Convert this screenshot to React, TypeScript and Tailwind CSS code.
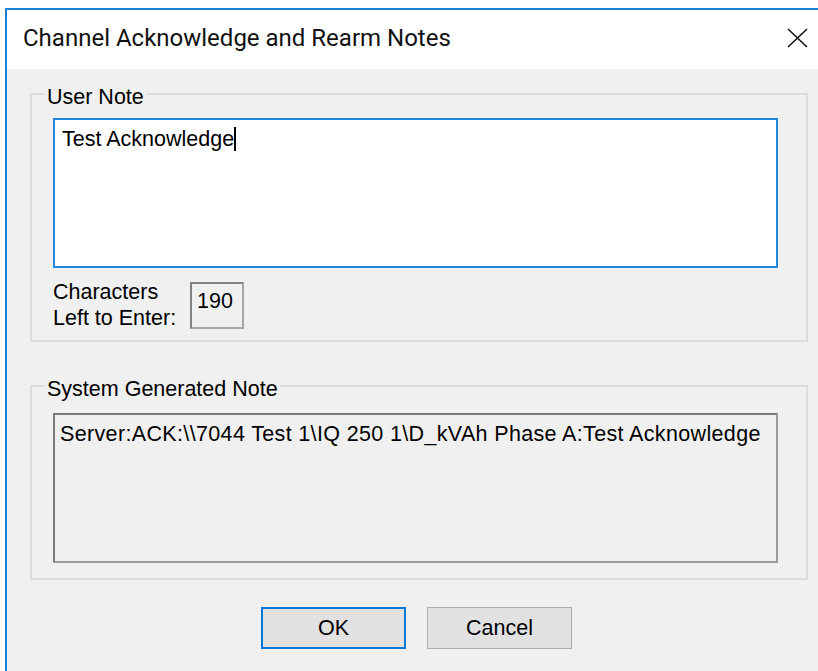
const ui = "font-['Liberation_Sans',Arial,sans-serif] text-[21.5px] leading-[26px] text-black";

function CloseIcon() {
  return (
    <svg width="21" height="20" viewBox="0 0 21 20" fill="none" stroke="#111" strokeWidth="1.6">
      <path d="M1 1 L20 19 M20 1 L1 19" />
    </svg>
  );
}

export default function App() {
  return (
    <div className="w-[818px] h-[671px] bg-white overflow-hidden pt-[8px] pl-[5px]">
      <div className="w-[813px] h-[663px] border-l-2 border-t-2 border-[#1883d7] flex flex-col">
        {/* caption */}
        <div className="h-[59px] bg-white flex items-start justify-between pt-[13px] pl-[16px] pr-[10px]">
          <span className="font-['Roboto',sans-serif] text-[24px] leading-[30px] text-[#111]">
            Channel Acknowledge and Rearm Notes
          </span>
          <div className="pt-[5px]">
            <CloseIcon />
          </div>
        </div>

        {/* dialog body */}
        <div className={`flex-1 bg-[#f0f0f0] flex flex-col ${ui}`}>
          <fieldset className="ml-[23px] mt-[8px] w-[778px] border-2 border-[#dcdcdc] pl-[21px] pt-[8px] pb-[9px]">
            <legend className="ml-[-8px] px-[2px] pt-[7px]">User Note</legend>
            <div className="w-[725px] h-[150px] bg-white border-2 border-[#2586dc] pl-[7px] pt-[6px]">
              Test Acknowledge
              <span className="inline-block w-[2px] h-[24px] bg-black align-[-5px]" />
            </div>
            <div className="flex mt-[11px]">
              <div className="w-[137px] whitespace-nowrap">
                <div>Characters</div>
                <div>Left to Enter:</div>
              </div>
              <div className="mt-[3px] w-[54px] h-[47px] border-2 border-t-[#828282] border-l-[#828282] border-b-[#a6a6a6] border-r-[#a6a6a6] pl-[5px] pt-[4px]">
                190
              </div>
            </div>
          </fieldset>

          <fieldset className="ml-[23px] mt-[27px] w-[778px] border-2 border-[#dcdcdc] pl-[21px] pt-[11px] pb-[15px]">
            <legend className="ml-[-8px] px-[2px] pt-[7px]">System Generated Note</legend>
            <div className="w-[725px] h-[150px] bg-[#f0f0f0] border-2 border-t-[#7a7a7a] border-l-[#7a7a7a] border-b-[#9a9a9a] border-r-[#9a9a9a] pl-[5px] pt-[6px] whitespace-nowrap tracking-[0.35px]">
              {"Server:ACK:\\\\7044 Test 1\\IQ 250 1\\D_kVAh Phase A:Test Acknowledge"}
            </div>
          </fieldset>

          <div className="flex gap-[21px] ml-[254px] mt-[27px]">
            <button className="w-[145px] h-[42px] bg-[#e1e1e1] border-2 border-[#0078d7] flex items-center justify-center">
              OK
            </button>
            <button className="w-[145px] h-[42px] bg-[#e1e1e1] border border-[#adadad] flex items-center justify-center">
              Cancel
            </button>
          </div>
        </div>
      </div>
    </div>
  );
}
